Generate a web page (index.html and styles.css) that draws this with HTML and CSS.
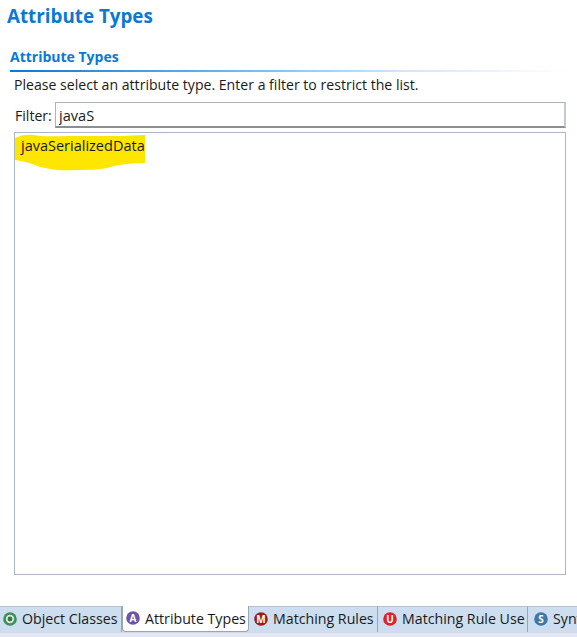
FILE: index.html
```html
<!DOCTYPE html>
<html lang="en">
<head>
<meta charset="utf-8">
<title>Attribute Types</title>
<link rel="stylesheet" href="styles.css">
</head>
<body>
<main class="page">
  <h1 class="title">Attribute Types</h1>
  <section class="section">
    <h2 class="section-title">Attribute Types</h2>
    <div class="rule"></div>
    <div class="content">
      <p class="hint">Please select an attribute type. Enter a filter to restrict the list.</p>
      <div class="filter-row">
        <label class="filter-label" for="filter">Filter:</label>
        <input class="filter-input" id="filter" type="text" value="javaS">
      </div>
      <div class="list">
        <svg class="marker" viewBox="0 0 131 38" width="131" height="38" aria-hidden="true">
          <path d="M0 5 C6 2 12 1 18 2 C28 4 40 3 60 3 L105 3 L130 2 L130 30 C118 30 106 31 96 34 C86 37 70 37 58 37 C44 38 30 36 20 32 C12 29 6 28 0 27 Z" fill="#ffe600"/>
        </svg>
        <div class="list-item">javaSerializedData</div>
      </div>
    </div>
  </section>
  <nav class="tabs">
    <div class="tab tab-first">
      <svg class="tab-icon" viewBox="0 0 14 14"><circle cx="7" cy="7" r="6.8" fill="#3f8f57"/><circle cx="7" cy="7" r="4.2" fill="#dbe9dc"/><circle cx="7" cy="7" r="2.4" fill="#2f7d47"/></svg>
      <span>Object Classes</span>
    </div>
    <div class="tab tab-active">
      <svg class="tab-icon" viewBox="0 0 14 14"><circle cx="7" cy="7" r="6.8" fill="#6a55a8"/><text x="7" y="10.6" class="icon-letter">A</text></svg>
      <span>Attribute Types</span>
    </div>
    <div class="tab tab-rules">
      <svg class="tab-icon" viewBox="0 0 14 14"><circle cx="7" cy="7" r="6.8" fill="#9c1c1c"/><text x="7" y="10.6" class="icon-letter">M</text></svg>
      <span>Matching Rules</span>
    </div>
    <div class="tab tab-use">
      <svg class="tab-icon" viewBox="0 0 14 14"><circle cx="7" cy="7" r="6.8" fill="#e0202a"/><text x="7" y="10.6" class="icon-letter">U</text></svg>
      <span>Matching Rule Use</span>
    </div>
    <div class="tab tab-last">
      <svg class="tab-icon" viewBox="0 0 14 14"><circle cx="7" cy="7" r="6.8" fill="#3f77a8"/><text x="7" y="10.6" class="icon-letter">S</text></svg>
      <span>Syntaxes</span>
    </div>
  </nav>
  <div class="tabs-foot"></div>
</main>
</body>
</html>
```
FILE: styles.css
```css
* { box-sizing: border-box; }
html, body { margin: 0; padding: 0; }
body {
  width: 577px;
  height: 637px;
  overflow: hidden;
  background: #fff;
  font-family: "Open Sans", "Noto Sans", sans-serif;
  font-size: 14.1px;
  color: #1a1a1a;
}
.page {
  display: flex;
  flex-direction: column;
  height: 637px;
}
.title {
  margin: 0;
  padding: 3px 0 0 7px;
  height: 47px;
  font-size: 18.8px;
  line-height: 27px;
  font-weight: 700;
  color: #0a78d4;
}
.section { flex: 1; display: flex; flex-direction: column; min-height: 0; }
.section-title {
  margin: 0;
  padding-left: 10px;
  height: 23px;
  font-size: 14px;
  line-height: 20px;
  font-weight: 700;
  color: #0a78d4;
}
.rule {
  margin-left: 10px;
  width: 557px;
  height: 2px;
  background: linear-gradient(to right, #0a78d4 0%, #7fbdf0 45%, #cfe6fa 70%, #ffffff 100%);
}
.content {
  flex: 1;
  padding: 3px 11px 31px 14px;
  display: flex;
  flex-direction: column;
  min-height: 0;
}
.hint { margin: 0; height: 27px; line-height: 20px; white-space: nowrap; }
.filter-row {
  display: flex;
  align-items: center;
  gap: 3px;
  height: 26px;
  padding-left: 1px;
}
.filter-label { width: 37px; }
.filter-input {
  flex: 1;
  min-width: 0;
  height: 26px;
  padding: 0 3px;
  border: 1px solid #aeb4bb;
  border-bottom: 2px solid #8a8f96;
  border-right: 2px solid #c6cacf;
  background: #fff;
  font: inherit;
  font-size: 14.6px;
  color: #1a1a1a;
  outline: none;
}
.list {
  position: relative;
  flex: 1;
  margin-top: 4px;
  border: 1px solid #aeb8c4;
  background: #fff;
  min-height: 0;
}
.marker { position: absolute; left: 0; top: 0; }
.list-item { position: relative; padding: 3px 0 0 6px; line-height: 20px; font-size: 14.5px; }
.tabs {
  display: flex;
  align-items: stretch;
  height: 26px;
  background: #cddef0;
  overflow: hidden;
  flex-shrink: 0;
  font-size: 14.2px;
}
.tab {
  display: flex;
  align-items: center;
  gap: 5px;
  flex-shrink: 0;
  padding: 0 0 2px 5px;
  border-top: 1px solid #b4c4d6;
  border-right: 1px solid #9aa5b1;
  white-space: nowrap;
}
.tab-first { width: 122px; padding-left: 3px; }
.tab-active {
  width: 127px;
  padding: 0 0 1px 3px;
  background: #fff;
  border: 1px solid #9aa5b1;
  border-top: none;
  border-radius: 0 0 4px 4px;
}
.tab-rules { width: 129px; }
.tab-use { width: 150px; }
.tab-last { flex: 0 0 auto; border-right: none; padding-left: 6px; }
.tab-icon { width: 14px; height: 14px; flex-shrink: 0; }
.icon-letter {
  fill: #fff;
  font-size: 10px;
  font-weight: 700;
  text-anchor: middle;
  font-family: "Open Sans", sans-serif;
}
.tabs-foot {
  height: 5px;
  flex-shrink: 0;
  border-top: 1px solid #d4d8de;
  background: #e2e8f4;
}
```
